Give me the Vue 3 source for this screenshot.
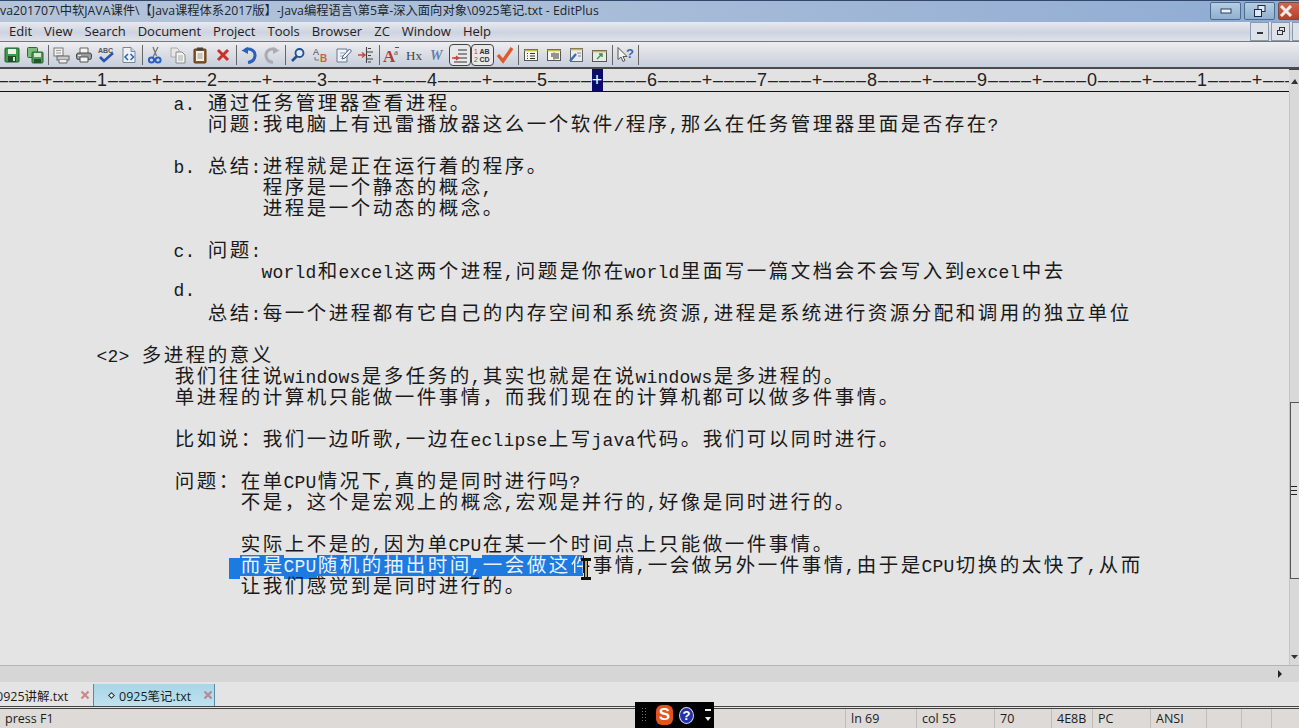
<script setup>
const TITLE = 'va201707\\中软JAVA课件\\【Java课程体系2017版】-Java编程语言\\第5章-深入面向对象\\0925笔记.txt - EditPlus'
const MENUS = ['Edit', 'View', 'Search', 'Document', 'Project', 'Tools', 'Browser', 'ZC', 'Window', 'Help']

// ── toolbar icons ─────────────────────────────────────────────
const ICONS = {
  save: '<rect x="2" y="2" width="14" height="14" rx="1" fill="#3f9a4c" stroke="#1f5c2a"/><rect x="5" y="3" width="8" height="5" fill="#e8f2e6"/><rect x="5" y="10" width="8" height="6" fill="#1e4f28"/><rect x="10" y="11" width="2" height="4" fill="#cfe3cd"/>',
  saveall: '<rect x="1.5" y="1.5" width="10" height="10" rx="1" fill="#7dbb7c" stroke="#2c6b36"/><rect x="6" y="6" width="11" height="11" rx="1" fill="#4d9e55" stroke="#24602e"/><rect x="8" y="7" width="7" height="4" fill="#d6e8d3"/><rect x="8" y="13" width="7" height="4" fill="#23562c"/>',
  preview: '<rect x="2" y="2" width="9" height="8" fill="#f2f2f2" stroke="#777"/><path d="M4 4.5h5M4 7h5" stroke="#999"/><rect x="5" y="10" width="12" height="4" fill="#c9c9c9" stroke="#666"/><path d="M7 14v3h8v-3" fill="#eee" stroke="#666"/>',
  print: '<path d="M5 7V2h8v5" fill="#f4f4f4" stroke="#666"/><rect x="1.5" y="7" width="15" height="6.5" rx="2" fill="#9a9a9a" stroke="#444"/><path d="M5 11h8v5H5z" fill="#f4f4f4" stroke="#555"/><path d="M3 9.5h3" stroke="#eee"/>',
  spell: '<text x="1" y="7" font-size="7" font-weight="700" font-family="Liberation Sans" fill="#555">ABC</text><path d="M3 11l4 4 9-8" fill="none" stroke="#2a55b8" stroke-width="2.6"/>',
  html: '<path d="M3 1.5h8l4 4v11H3z" fill="#eef1f6" stroke="#7b8799"/><path d="M11 1.5v4h4" fill="#cfd6e2" stroke="#7b8799"/><path d="M8 8l-3 3 3 3M10.5 8l3 3-3 3" fill="none" stroke="#2a64b5" stroke-width="1.5"/>',
  cut: '<path d="M12 1L7 11M7 1l3.5 9" fill="none" stroke="#777" stroke-width="1.3"/><circle cx="5.5" cy="14" r="2.6" fill="none" stroke="#2a5fc4" stroke-width="2"/><circle cx="12" cy="14" r="2.6" fill="none" stroke="#2a5fc4" stroke-width="2"/>',
  copy: '<path d="M2 2h6l2 2v7H2z" fill="#e7e7e7" stroke="#aaa"/><path d="M7 6h6l3 3v8H7z" fill="#f3f3f3" stroke="#888"/><path d="M9 10h5M9 12h5M9 14h5" stroke="#aaa"/>',
  paste: '<rect x="3" y="3" width="12" height="14" rx="1" fill="#8a5a28" stroke="#5b3a17"/><rect x="5" y="5" width="8" height="10" fill="#f4f0e2"/><rect x="6" y="1.5" width="6" height="3" fill="#444"/><path d="M6.5 8h5M6.5 10h5M6.5 12h5" stroke="#999"/>',
  del: '<path d="M4 4l10 10M14 4L4 14" stroke="#c9322b" stroke-width="3"/>',
  undo: '<path d="M5 3.5C11 2 15.5 5 15 10c-.4 3.6-3.5 6-7 6.5" fill="none" stroke="#2a62b8" stroke-width="3"/><path d="M1.5 4.5L8 1v7z" fill="#2a62b8"/>',
  redo: '<path d="M13 3.5C7 2 2.5 5 3 10c.4 3.6 3.5 6 7 6.5" fill="none" stroke="#a9adb3" stroke-width="3"/><path d="M16.5 4.5L10 1v7z" fill="#a9adb3"/>',
  find: '<circle cx="10.5" cy="7" r="4" fill="#dfe9f7" stroke="#22518f" stroke-width="1.8"/><path d="M8 10l-5 5" stroke="#22518f" stroke-width="2.6"/>',
  replace: '<text x="1" y="9" font-size="9" font-family="Liberation Sans" fill="#444">A</text><text x="8" y="16" font-size="10" font-weight="700" font-family="Liberation Sans" fill="#d8602a">B</text><path d="M3 11v3h4" fill="none" stroke="#777"/>',
  doc: '<path d="M3 3h10v13H3z" fill="#eef1f6" stroke="#68788f"/><path d="M6 7h5M6 10h4" stroke="#9aa6b7"/><path d="M15.5 3L9 10l-1 3 3-1 6.5-7z" fill="#fff" stroke="#44628f"/>',
  jump: '<path d="M1 9h6M5 6.5L8 9l-3 2.5" fill="none" stroke="#d0443a" stroke-width="1.5"/><path d="M11 2.5h3M10 6h6M11 9.5h3M10 13h6M11 16h3M9.5 1v16" stroke="#444" stroke-width="1.1" fill="none"/>',
  font: '<text x="0" y="16" font-size="17" font-weight="700" font-family="Liberation Serif" fill="#b33a3a">A</text><text x="11" y="9" font-size="9" font-family="Liberation Serif" fill="#555">a</text><path d="M12 1.5h4" stroke="#555"/>',
  hx: '<text x="0" y="14" font-size="13" font-family="Liberation Serif" fill="#444">Hx</text>',
  w: '<text x="2" y="14" font-size="14" font-weight="700" font-style="italic" font-family="Liberation Serif" fill="#5f83b3">W</text>',
  wrap: '<path d="M7 4h9M7 8h9M3 12h13M3 16h13" stroke="#333" stroke-width="1.2"/><path d="M1 12h6M5 10l2.500 2L5 14" fill="none" stroke="#d0443a" stroke-width="1.4"/>',
  nums: '<text x="1" y="8" font-size="7" font-family="Liberation Sans" fill="#c0392b">1</text><text x="1" y="16" font-size="7" font-family="Liberation Sans" fill="#c0392b">2</text><text x="6.5" y="8" font-size="7" font-weight="700" font-family="Liberation Sans" fill="#333">AB</text><text x="6.5" y="16" font-size="7" font-weight="700" font-family="Liberation Sans" fill="#333">CD</text>',
  check: '<path d="M2 9l5 6L16 2" fill="none" stroke="#e2592a" stroke-width="3.4"/>',
  list: '<rect x="2.5" y="3.5" width="13" height="11" fill="#f6f6ea" stroke="#555"/><path d="M2.5 4.5h13" stroke="#c8b84a" stroke-width="1.6"/><path d="M5 7.500h1M8 7.500h5M5 10h1M8 10h5M5 12.500h1M8 12.500h5" stroke="#333"/>',
  panel: '<rect x="2.5" y="3.5" width="13" height="11" fill="#f6f6ea" stroke="#555"/><path d="M2.5 4.5h13" stroke="#c8b84a" stroke-width="1.6"/><path d="M9 6.500v7M6 8h2M6 10h2M10 8h4M10 10h4M10 12h4" stroke="#333"/>',
  tool: '<rect x="3.5" y="2.5" width="12" height="13" fill="#e9ecf2" stroke="#666"/><path d="M3.5 3.5h12" stroke="#c8b84a" stroke-width="1.6"/><path d="M9 8l-6 7" stroke="#3a6db5" stroke-width="2.4"/><path d="M10 7h4M11 10h3" stroke="#888"/>',
  win: '<rect x="2.5" y="4.5" width="14" height="11" fill="#e6ece4" stroke="#555"/><path d="M2.5 5.5h14" stroke="#c8b84a" stroke-width="1.6"/><path d="M7 13l5-5M9 8h3v3" fill="none" stroke="#3f8f4a" stroke-width="1.4"/>',
  help: '<path d="M2 1.5v12l3-2.500 2 4.500 2-1-2-4h4z" fill="#f2f2f2" stroke="#555"/><text x="10" y="12" font-size="13" font-weight="700" font-family="Liberation Sans" fill="#3f66a8">?</text>'
}

const TOOL_GROUPS = [
  ['save', 'saveall'],
  ['preview', 'print', 'spell', 'html'],
  ['cut', 'copy', 'paste', 'del'],
  ['undo', 'redo'],
  ['find', 'replace', 'doc', 'jump'],
  ['font', 'hx', 'w', 'wrap', 'nums', 'check'],
  ['list', 'panel', 'tool', 'win'],
  ['help']
]
const PRESSED = ['wrap', 'nums']

// ── ruler and text share the same column grid (11px a cell) ──
const CELL = 11
const CURSOR_COL = 55
const rulerCells = Array.from({ length: 118 }, (_, i) => {
  const col = i + 1
  let ch = '–'
  if (col % 10 === 0) ch = String((col / 10) % 10)
  else if (col % 5 === 0) ch = '+'
  return { col, ch }
})

const LINES = [
  [17, 'a. 通过任务管理器查看进程。'],
  [20, '问题:我电脑上有迅雷播放器这么一个软件/程序,那么在任务管理器里面是否存在?'],
  [0, ''],
  [17, 'b. 总结:进程就是正在运行着的程序。'],
  [25, '程序是一个静态的概念,'],
  [25, '进程是一个动态的概念。'],
  [0, ''],
  [17, 'c. 问题:'],
  [25, 'world和excel这两个进程,问题是你在world里面写一篇文档会不会写入到excel中去'],
  [17, 'd.'],
  [20, '总结:每一个进程都有它自己的内存空间和系统资源,进程是系统进行资源分配和调用的独立单位'],
  [0, ''],
  [10, '<2> 多进程的意义'],
  [17, '我们往往说windows是多任务的,其实也就是在说windows是多进程的。'],
  [17, '单进程的计算机只能做一件事情，而我们现在的计算机都可以做多件事情。'],
  [0, ''],
  [17, '比如说：我们一边听歌,一边在eclipse上写java代码。我们可以同时进行。'],
  [0, ''],
  [17, '问题：在单CPU情况下,真的是同时进行吗?'],
  [23, '不是，这个是宏观上的概念,宏观是并行的,好像是同时进行的。'],
  [0, ''],
  [23, '实际上不是的,因为单CPU在某一个时间点上只能做一件事情。'],
  [22, ' 而是CPU随机的抽出时间,一会做这件事情,一会做另外一件事情,由于是CPU切换的太快了,从而', 18],
  [23, '让我们感觉到是同时进行的。']
]

const rows = LINES.map(([col, text, selEnd]) => ({
  pad: col * CELL - 13.5,
  cells: [...text].map((ch, i) => ({
    ch,
    wide: ch.charCodeAt(0) > 255,
    sel: selEnd !== undefined && i < selEnd,
    edge: selEnd === i
  }))
}))

const STATUS = [
  { text: 'ln 69', w: 71 },
  { text: 'col 55', w: 78 },
  { text: '70', w: 57 },
  { text: '4E8B', w: 41 },
  { text: 'PC', w: 58 },
  { text: 'ANSI', w: 56 },
  { text: '', w: 35 },
  { text: '', w: 30 },
  { text: '', w: 28 }
]
</script>

<template>
  <div class="win">
    <!-- Title bar -->
    <div class="title-bar">
      <span class="title-text">{{ TITLE }}</span>
      <div class="win-btns">
        <div class="win-btn">
          <svg width="12" height="8" viewBox="0 0 12 8"><rect x="1" y="2" width="10" height="4" fill="#eef3fa" stroke="#29405f"/></svg>
        </div>
        <div class="win-btn">
          <svg width="14" height="14" viewBox="0 0 14 14" fill="#dfe8f4" stroke="#1c2c44"><rect x="5" y="1.5" width="7" height="6"/><rect x="1.5" y="5.5" width="7" height="7"/></svg>
        </div>
        <div class="win-btn close">
          <svg width="14" height="12" viewBox="0 0 14 12"><path d="M2 1l10 10M12 1L2 11" stroke="#f3ebe6" stroke-width="3"/></svg>
        </div>
      </div>
    </div>

    <!-- Menu bar -->
    <div class="menu-bar">
      <span v-for="m in MENUS" :key="m" class="menu-item">{{ m }}</span>
      <div class="mdi-btns">
        <div class="mdi-btn"><span class="mdi-min"></span></div>
        <div class="mdi-btn">
          <svg width="10" height="10" viewBox="0 0 10 10" fill="none" stroke="#333"><rect x="3.5" y="1.5" width="5" height="4"/><rect x="1.5" y="4.5" width="5" height="4" fill="#dfe3ea"/></svg>
        </div>
        <div class="mdi-btn"></div>
      </div>
    </div>

    <!-- Toolbar -->
    <div class="tool-bar">
      <template v-for="(group, g) in TOOL_GROUPS" :key="g">
        <div class="tool-group">
          <div
            v-for="id in group"
            :key="id"
            :class="['tool', PRESSED.includes(id) ? 'pressed' : '']"
          >
            <svg width="18" height="18" viewBox="0 0 18 18" v-html="ICONS[id]"></svg>
          </div>
        </div>
        <div class="tool-sep"></div>
      </template>
    </div>

    <!-- Ruler -->
    <div class="ruler-row">
      <div class="ruler">
        <span
          v-for="c in rulerCells"
          :key="c.col"
          :class="['ruler-cell', c.col === CURSOR_COL ? 'at-cursor' : '']"
        >{{ c.ch }}</span>
      </div>
      <div class="scroll-top">
        <svg width="9" height="7" viewBox="0 0 9 7"><path d="M1 6l4-5 3 5z" fill="#333"/></svg>
      </div>
    </div>

    <!-- Editor -->
    <div class="editor-row">
      <div class="editor">
        <div v-for="(row, i) in rows" :key="i" class="line" :style="{ paddingLeft: row.pad + 'px' }">
          <span
            v-for="(c, j) in row.cells"
            :key="j"
            :class="['cell', c.wide ? 'wide' : 'narrow', c.sel ? 'sel' : '', c.edge ? 'edge' : '']"
          ><span :class="c.edge ? 'edge-ink' : ''">{{ c.ch }}</span></span>
        </div>
        <svg class="ibeam" width="12" height="24" viewBox="0 0 12 24">
          <path d="M1 1h10v3H8v16h3v3H1v-3h3V4H1z" fill="#111"/>
          <rect x="5" y="4" width="2" height="16" fill="#c2a468"/>
        </svg>
      </div>
      <div class="vscroll">
        <div class="vtrack"></div>
        <div class="vthumb"><span class="grip"></span></div>
        <div class="vtrack-low">
          <svg width="9" height="6" viewBox="0 0 9 6"><path d="M1 1h7L4.500 5z" fill="#333"/></svg>
        </div>
      </div>
    </div>

    <!-- Horizontal scrollbar -->
    <div class="hscroll">
      <svg width="6" height="10" viewBox="0 0 6 10"><path d="M1 1l4 4-4 4z" fill="#222"/></svg>
    </div>

    <!-- Tabs -->
    <div class="tab-bar">
      <div class="tab first">
        <span class="tab-label">0925讲解.txt</span>
        <svg class="tab-x" width="10" height="10" viewBox="0 0 10 10"><path d="M1.500 1.500l7 7M8.500 1.500l-7 7" stroke="#c98a8a" stroke-width="2.200"/></svg>
      </div>
      <div class="tab active">
        <span class="diamond"></span>
        <span class="tab-label">0925笔记.txt</span>
        <svg class="tab-x" width="10" height="10" viewBox="0 0 10 10"><path d="M1.500 1.500l7 7M8.500 1.500l-7 7" stroke="#b58a95" stroke-width="2.200"/></svg>
      </div>
    </div>

    <!-- Status bar -->
    <div class="status-bar">
      <span class="status-hint">press F1</span>
      <span v-for="(s, i) in STATUS" :key="i" class="status-field" :style="{ width: s.w + 'px' }">{{ s.text }}</span>
      <div class="ime">
        <span class="ime-dots"></span>
        <span class="ime-s">S</span>
        <span class="ime-help">?</span>
        <span class="ime-arrows">
          <span class="ime-dash"></span>
          <span class="ime-down"></span>
        </span>
      </div>
    </div>
  </div>
</template>

<style scoped>
.win {
  width: 1299px;
  height: 728px;
  display: flex;
  flex-direction: column;
  overflow: hidden;
  position: relative;
  background: #e4e4e4;
  color: #1c1c1c;
  font-family: "Open Sans", "Noto Sans CJK SC", sans-serif;
}

/* Title bar */
.title-bar {
  height: 22px;
  flex-shrink: 0;
  display: flex;
  align-items: center;
  overflow: hidden;
  padding-bottom: 3px;
  background: linear-gradient(90deg, #b4c4d9 0%, #a9bdd8 45%, #8fabd3 100%);
  border-top: 1px solid #33476b;
  box-sizing: border-box;
}
.title-text {
  flex: 1;
  min-width: 0;
  white-space: nowrap;
  font-family: "Open Sans", "Noto Sans CJK SC", sans-serif;
  font-size: 12.3px;
  color: #20262e;
}
.win-btns {
  display: flex;
  gap: 3px;
  margin-right: -1px;
  align-self: flex-start;
  margin-top: 1px;
}
.win-btn {
  width: 29px;
  height: 16px;
  display: flex;
  align-items: center;
  justify-content: center;
  border: 1px solid #4e6b8f;
  border-radius: 2px;
  background: linear-gradient(180deg, #b6cde4, #8eb0cf);
}
.win-btn.close {
  width: 20px;
  justify-content: flex-start;
  background: linear-gradient(180deg, #d2674f, #b5402c);
  border-color: #7a4a44;
}

/* Menu bar */
.menu-bar {
  height: 20px;
  flex-shrink: 0;
  display: flex;
  align-items: center;
  gap: 12px;
  padding-left: 9px;
  padding-bottom: 1px;
  background: linear-gradient(180deg, #e9e9ee 0%, #cdd3e0 55%, #dfe2e9 100%);
  border-bottom: 1px solid #777;
  box-sizing: border-box;
}
.menu-item {
  font-size: 13px;
  color: #222;
  white-space: nowrap;
}
.mdi-btns {
  margin-left: auto;
  display: flex;
  gap: 2px;
  margin-right: -12px;
}
.mdi-btn {
  width: 17px;
  height: 17px;
  display: flex;
  align-items: center;
  justify-content: center;
  border: 1px solid #8a9bb0;
  background: #dde1e8;
}
.mdi-min {
  width: 6px;
  height: 2px;
  margin-top: 4px;
  background: #333;
}

/* Toolbar */
.tool-bar {
  height: 27px;
  flex-shrink: 0;
  display: flex;
  align-items: center;
  padding: 1px 0 0 1px;
  background: linear-gradient(180deg, #eeeef1 0%, #dcdee4 45%, #c7cfdd 100%);
  border-bottom: 2px solid #4b4b4b;
  box-sizing: border-box;
}
.tool-group {
  display: flex;
}
.tool {
  width: 22.5px;
  height: 22px;
  display: flex;
  align-items: center;
  justify-content: center;
  box-sizing: border-box;
}
.tool.pressed {
  border: 1px solid #444;
  border-radius: 4px;
  background: #e8e8ea;
}
.tool-sep {
  width: 1px;
  height: 20px;
  margin: 0 1.5px;
  background: #666;
}

/* Ruler */
.ruler-row {
  height: 23px;
  flex-shrink: 0;
  display: flex;
}
.ruler {
  flex: 1;
  min-width: 0;
  display: flex;
  overflow: hidden;
  background: #e2e2e2;
  border-bottom: 1px solid #111;
  box-sizing: border-box;
}
.ruler-cell {
  flex: 0 0 11px;
  height: 22px;
  line-height: 22px;
  text-align: center;
  font-family: "Liberation Sans", sans-serif;
  font-size: 18px;
  color: #222;
  position: relative;
  left: -2.5px;
}
.ruler-cell.at-cursor {
  background: #0a0a6a;
  color: #fff;
}
.scroll-top {
  width: 10px;
  display: flex;
  align-items: center;
  justify-content: center;
  background: #d9d9d9;
  border-top: 1px solid #444;
  box-sizing: border-box;
}

/* Editor */
.editor-row {
  flex: 1;
  min-height: 0;
  display: flex;
}
.editor {
  flex: 1;
  min-width: 0;
  overflow: hidden;
  position: relative;
  padding-top: 1px;
  background: #e4e4e4;
  box-sizing: border-box;
}
.line {
  height: 21px;
  display: flex;
  align-items: baseline;
  white-space: pre;
  font-size: 18px;
  line-height: 18px;
  box-sizing: border-box;
}
.cell {
  display: block;
  height: 21px;
  flex-shrink: 0;
  text-align: center;
}
.cell.narrow {
  width: 11px;
  font-family: "Liberation Mono", monospace;
  font-size: 18px;
  color: #1a1a1a;
}
.cell.wide {
  width: 22px;
  font-family: "Noto Sans CJK SC", sans-serif;
  font-size: 19.5px;
  color: #1a1a1a;
}
.cell.sel {
  background: #1c7ae0;
  color: #e8f1fb;
}
.cell.edge {
  background: linear-gradient(90deg, #1c7ae0 13px, transparent 13px);
}
.edge-ink {
  display: block;
  background: linear-gradient(90deg, #e8f1fb 13px, #1a1a1a 13px);
  -webkit-background-clip: text;
  background-clip: text;
  color: transparent;
}
.ibeam {
  position: absolute;
  left: 580px;
  top: 465px;
}

/* Scrollbars */
.vscroll {
  width: 10px;
  flex-shrink: 0;
  display: flex;
  flex-direction: column;
  background: #d9d9d9;
  border-left: 1px solid #c4c4c4;
  box-sizing: border-box;
}
.vtrack {
  height: 310px;
}
.vthumb {
  height: 177px;
  display: flex;
  align-items: center;
  background: #e0e0e0;
  border: 1px solid #555;
  border-right: none;
  box-sizing: border-box;
}
.grip {
  width: 6px;
  height: 7px;
  border-top: 1px solid #222;
  border-bottom: 1px solid #222;
  background: linear-gradient(#222, #222) center / 100% 1px no-repeat;
}
.vtrack-low {
  flex: 1;
  display: flex;
  align-items: flex-end;
  justify-content: center;
  padding-bottom: 5px;
}
.hscroll {
  height: 17px;
  flex-shrink: 0;
  display: flex;
  align-items: center;
  justify-content: flex-end;
  padding-right: 16px;
  background: #d6d6d6;
  border-top: 1px solid #b5b5b5;
  box-sizing: border-box;
}

/* Tabs */
.tab-bar {
  height: 27px;
  flex-shrink: 0;
  display: flex;
  padding-top: 2px;
  background: #e4e4e4;
  border-bottom: 3px double #444;
  box-sizing: border-box;
}
.tab {
  display: flex;
  align-items: center;
  font-size: 12.5px;
  white-space: nowrap;
  position: relative;
  box-sizing: border-box;
}
.tab.first {
  width: 93px;
  overflow: hidden;
}
.tab.first .tab-label {
  margin-left: -4px;
}
.tab.active {
  width: 122px;
  padding-left: 15px;
  background: linear-gradient(180deg, #a6d6e8, #c0e2ee);
  border-left: 1px solid #5a8ba6;
  border-right: 1px solid #5a8ba6;
}
.tab-label {
  color: #1c1c1c;
}
.tab-x {
  position: absolute;
  right: 1px;
  top: 6px;
}
.tab.first .tab-x {
  right: 3px;
}
.diamond {
  width: 5px;
  height: 5px;
  margin-right: 5px;
  transform: rotate(45deg);
  background: #e8f3f6;
  border: 1px solid #333;
  box-sizing: border-box;
}

/* Status bar */
.status-bar {
  height: 19px;
  flex-shrink: 0;
  display: flex;
  align-items: center;
  font-size: 12.5px;
  background: #dedad8;
  position: relative;
}
.status-hint {
  flex: 1;
  padding-left: 5px;
}
.status-field {
  height: 100%;
  flex-shrink: 0;
  padding-left: 5px;
  line-height: 20px;
  border-left: 1px solid #c0bcba;
  box-sizing: border-box;
}
.ime {
  position: absolute;
  left: 635px;
  top: -7px;
  width: 79px;
  height: 26px;
  display: flex;
  align-items: center;
  gap: 6px;
  padding-left: 6px;
  background: #000;
  box-sizing: border-box;
}
.ime-dots {
  width: 6px;
  height: 16px;
  background-image: radial-gradient(#777 1px, transparent 1px);
  background-size: 3px 3px;
}
.ime-s {
  width: 17px;
  height: 20px;
  margin-left: 3px;
  display: flex;
  align-items: center;
  justify-content: center;
  border-radius: 6px;
  font-family: "Liberation Sans", sans-serif;
  font-size: 17px;
  font-weight: 700;
  color: #fff;
  background: #e2531f;
}
.ime-help {
  width: 15px;
  height: 17px;
  display: flex;
  align-items: center;
  justify-content: center;
  border-radius: 50%;
  font-family: "Liberation Sans", sans-serif;
  font-size: 13px;
  font-weight: 700;
  color: #fff;
  background: #2531a8;
  border: 1px solid #cfd3ee;
  box-sizing: border-box;
}
.ime-arrows {
  display: flex;
  flex-direction: column;
  align-items: center;
  gap: 6px;
  margin-left: 5px;
}
.ime-dash {
  width: 6px;
  height: 2px;
  background: #eee;
}
.ime-down {
  width: 0;
  height: 0;
  border-left: 3px solid transparent;
  border-right: 3px solid transparent;
  border-top: 4px solid #eee;
}
</style>

<style>
html, body {
  margin: 0;
  overflow: hidden;
  background: #e4e4e4;
}
</style>
